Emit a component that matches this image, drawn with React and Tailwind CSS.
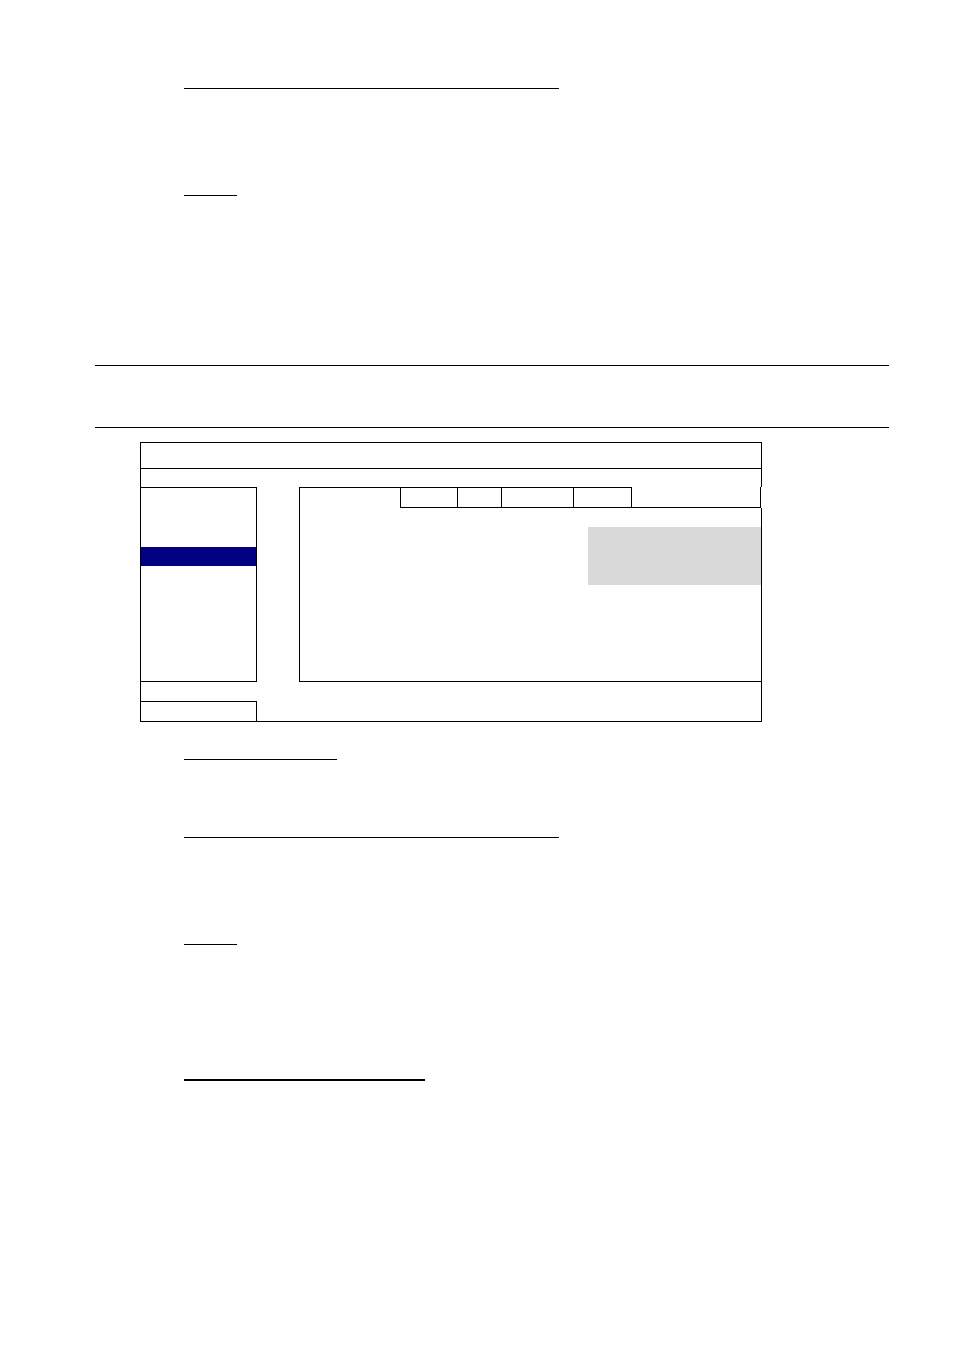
import React from 'react';

const tabs = [
    { id: 'tab-2', style: 'w-[57px] border-l border-y' },
    { id: 'tab-3', style: 'w-11 border-l border-y' },
    { id: 'tab-4', style: 'w-[72px] border-l border-y' },
    { id: 'tab-5', style: 'w-[59px] border' },
];

// Underlined heading followed by the blank body of its section
const Section = ({ line, body }) => (
    <section className="pl-[89px]">
        <div className={`max-w-full border-black ${line}`} />
        <div className={body} />
    </section>
);

const Sidebar = () => (
    <aside className="w-[117px] shrink-0 border border-black">
        <ul className="pt-[59px]">
            <li className="h-[19px] bg-[#000080]" />
        </ul>
    </aside>
);

const TabBar = () => (
    <nav className="flex h-[21px] pr-px">
        <button type="button" className="w-[101px] shrink-0 border-l border-t border-black" />
        {tabs.map((tab) => (
            <button key={tab.id} type="button" className={`shrink-0 border-black ${tab.style}`} />
        ))}
        <div className="flex-1 border-b border-r border-black" />
    </nav>
);

const SettingsWindow = () => (
    <div className="w-full max-w-[622px]">
        <header className="h-[27px] border border-black" />
        <div className="h-[18px] border-x border-black" />

        <div className="flex min-h-[195px] gap-[42px]">
            <Sidebar />
            <div className="flex flex-1 flex-col">
                <TabBar />
                <div className="flex-1 border-x border-b border-black pt-[19px]">
                    <div className="ml-auto h-[58px] w-[173px] bg-[#d9d9d9]" />
                </div>
            </div>
        </div>

        <footer className="border-x border-b border-black pt-[19px]">
            <button type="button" className="block h-5 w-[116px] border-r border-t border-black" />
        </footer>
    </div>
);

const App = () => {
    return (
        <main className="min-h-screen bg-white pl-[95px] pr-[65px] pt-[88px] font-['Liberation_Sans',sans-serif] text-black">
            <Section line="w-[375px] border-t" body="h-[106px]" />
            <Section line="w-[53px] border-t" body="h-[169px]" />

            <div className="h-[63px] border-y border-black" />

            <div className="pb-[37px] pl-[45px] pt-[14px]">
                <SettingsWindow />
            </div>

            <Section line="w-[153px] border-t" body="h-[77px]" />
            <Section line="w-[375px] border-t" body="h-[106px]" />
            <Section line="w-[53px] border-t" body="h-[134px]" />
            <Section line="w-[241px] border-t-2" body="h-[134px]" />
        </main>
    );
};

export default App;
